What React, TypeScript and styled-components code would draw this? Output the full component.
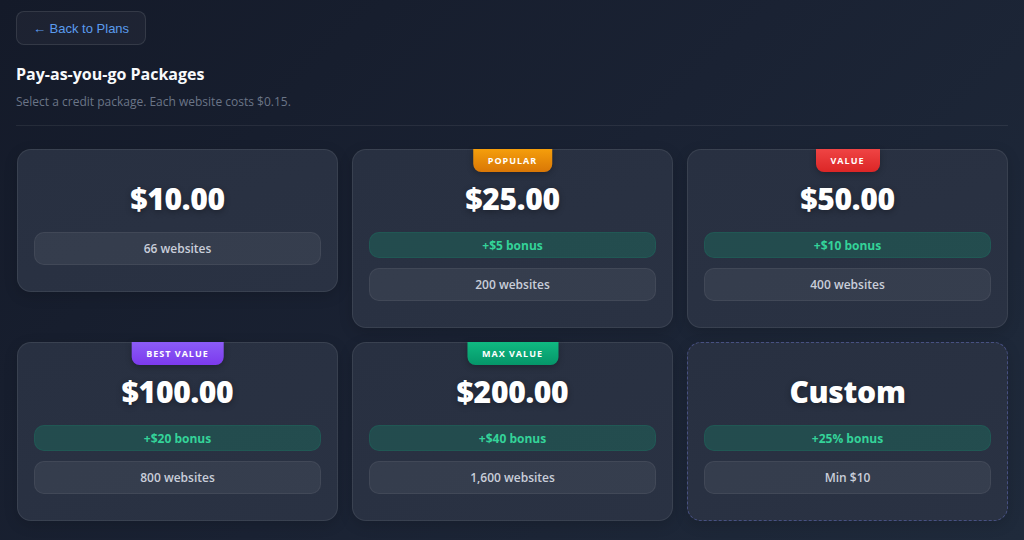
import React from 'react';
import styled, { createGlobalStyle } from 'styled-components';

const GlobalStyle = createGlobalStyle`
  html, body {
    margin: 0;
    padding: 0;
    background: #182031;
  }
  body {
    font-family: "Open Sans", "Noto Sans", "Liberation Sans", sans-serif;
    color: #e5e7eb;
  }
  * { box-sizing: border-box; }
`;

type BadgeTone = 'orange' | 'red' | 'purple' | 'green';

const badgeColors: Record<BadgeTone, [string, string]> = {
    orange: ['#f59e0b', '#d97706'],
    red: ['#ef4444', '#dc2626'],
    purple: ['#8b5cf6', '#7c3aed'],
    green: ['#10b981', '#059669'],
};

interface Pack {
    price: string;
    bonus?: string;
    detail: string;
    badge?: string;
    tone?: BadgeTone;
    custom?: boolean;
}

const packs: Pack[] = [
    { price: '$10.00', detail: '66 websites' },
    { price: '$25.00', bonus: '+$5 bonus', detail: '200 websites', badge: 'Popular', tone: 'orange' },
    { price: '$50.00', bonus: '+$10 bonus', detail: '400 websites', badge: 'Value', tone: 'red' },
    { price: '$100.00', bonus: '+$20 bonus', detail: '800 websites', badge: 'Best Value', tone: 'purple' },
    { price: '$200.00', bonus: '+$40 bonus', detail: '1,600 websites', badge: 'Max Value', tone: 'green' },
    { price: 'Custom', bonus: '+25% bonus', detail: 'Min $10', custom: true },
];

const Page = styled.div`
    min-height: 540px;
    padding: 11px 16px 20px;
    background: linear-gradient(135deg, #141a29 0%, #1a2233 50%, #1f2a3b 100%);
`;

const BackButton = styled.button`
    height: 34px;
    padding: 0 16px;
    border-radius: 8px;
    border: 1px solid rgba(255, 255, 255, 0.1);
    background: rgba(255, 255, 255, 0.04);
    color: #5b9cee;
    font-family: "Liberation Sans", Arial, sans-serif;
    font-size: 13px;
    cursor: pointer;
`;

const Title = styled.h2`
    margin: 19px 0 0;
    font-size: 16px;
    line-height: 20px;
    font-weight: 700;
    color: #f8fafc;
`;

const Subtitle = styled.p`
    margin: 10px 0 0;
    font-size: 12px;
    line-height: 16px;
    color: #6b7587;
`;

const Divider = styled.hr`
    margin: 15px 0 0;
    border: none;
    height: 1px;
    background: rgba(255, 255, 255, 0.07);
`;

const Grid = styled.div`
    margin-top: 23px;
    padding-left: 1px;
    display: grid;
    grid-template-columns: repeat(3, 1fr);
    gap: 14px;
    align-items: start;
`;

const Card = styled.div<{ $custom?: boolean }>`
    position: relative;
    display: flex;
    flex-direction: column;
    gap: 10px;
    padding: 30px 16px 26px;
    border-radius: 14px;
    background: linear-gradient(160deg, #283041 0%, #2a3243 100%);
    border: 1px ${p => (p.$custom ? 'dashed rgba(129, 140, 248, 0.35)' : 'solid rgba(255, 255, 255, 0.08)')};
    box-shadow: 0 4px 14px rgba(0, 0, 0, 0.15);
`;

const Badge = styled.span<{ $tone: BadgeTone }>`
    position: absolute;
    top: -1px;
    left: 50%;
    transform: translateX(-50%);
    height: 23px;
    padding: 0 15px;
    display: flex;
    align-items: center;
    border-radius: 0 0 8px 8px;
    background: linear-gradient(180deg, ${p => badgeColors[p.$tone][0]}, ${p => badgeColors[p.$tone][1]});
    color: #fff;
    font-size: 9px;
    font-weight: 700;
    letter-spacing: 1px;
    text-transform: uppercase;
    white-space: nowrap;
    box-shadow: 0 2px 6px rgba(0, 0, 0, 0.25);
`;

const Price = styled.div`
    margin-bottom: 4px;
    text-align: center;
    font-size: 30px;
    line-height: 38px;
    font-weight: 800;
    color: #ffffff;
    letter-spacing: -0.3px;
    text-shadow: 0 2px 6px rgba(0, 0, 0, 0.3);
`;

const Bonus = styled.div`
    height: 26px;
    display: flex;
    align-items: center;
    justify-content: center;
    border-radius: 10px;
    background: rgba(16, 185, 129, 0.2);
    border: 1px solid rgba(16, 185, 129, 0.12);
    color: #34d399;
    font-size: 12px;
    font-weight: 700;
`;

const Detail = styled.div`
    height: 33px;
    display: flex;
    align-items: center;
    justify-content: center;
    border-radius: 10px;
    background: rgba(255, 255, 255, 0.06);
    border: 1px solid rgba(255, 255, 255, 0.06);
    color: #c9ceda;
    font-size: 12px;
    font-weight: 600;
`;

const App = () => {
    return (
        <>
            <GlobalStyle />
            <Page>
                <BackButton>← Back to Plans</BackButton>
                <Title>Pay-as-you-go Packages</Title>
                <Subtitle>Select a credit package. Each website costs $0.15.</Subtitle>
                <Divider />
                <Grid>
                    {packs.map(p => (
                        <Card key={p.price} $custom={p.custom}>
                            {p.badge && p.tone && <Badge $tone={p.tone}>{p.badge}</Badge>}
                            <Price>{p.price}</Price>
                            {p.bonus && <Bonus>{p.bonus}</Bonus>}
                            <Detail>{p.detail}</Detail>
                        </Card>
                    ))}
                </Grid>
            </Page>
        </>
    );
};

export default App;
